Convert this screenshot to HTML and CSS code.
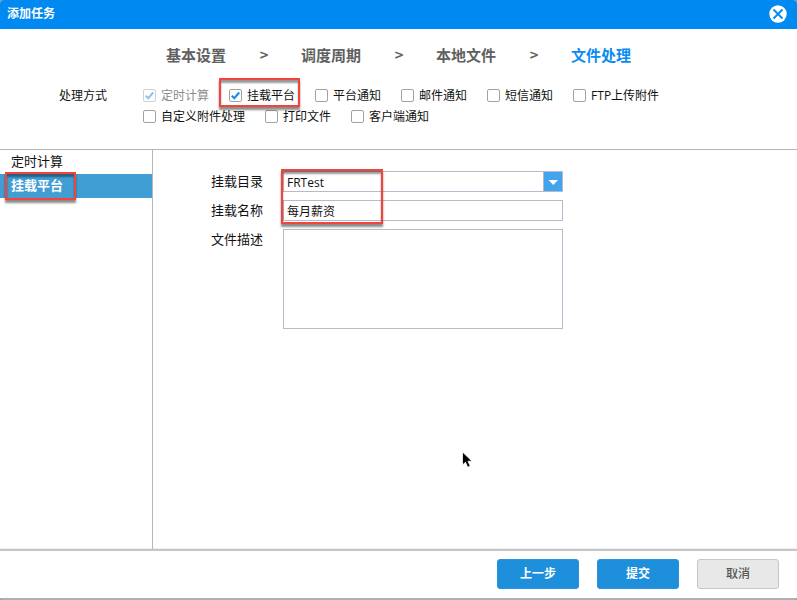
FILE: index.html
```html
<!DOCTYPE html>
<html lang="zh-CN">
<head>
<meta charset="utf-8">
<title>添加任务</title>
<link rel="stylesheet" href="styles.css">
</head>
<body>
<form class="dialog">
  <header class="titlebar">
    <h1 class="title">添加任务</h1>
    <button class="close" type="button" aria-label="关闭">
      <svg viewBox="0 0 18 18" width="18" height="18"><circle cx="9" cy="9" r="8.7" fill="#fff"/><path d="M4.500 4.500l9 9M13.500 4.500l-9 9" stroke="#0a8cee" stroke-width="2" fill="none"/></svg>
    </button>
  </header>

  <nav class="steps">
    <span>基本设置</span><span class="sep">&gt;</span>
    <span>调度周期</span><span class="sep">&gt;</span>
    <span>本地文件</span><span class="sep">&gt;</span>
    <span class="current">文件处理</span>
  </nav>

  <section class="methods">
    <span class="methods-label">处理方式</span>
    <div class="options">
      <label class="option disabled"><input type="checkbox" checked disabled>定时计算</label>
      <label class="option marked"><input type="checkbox" checked>挂载平台<span class="mark mark-option"></span></label>
      <label class="option"><input type="checkbox">平台通知</label>
      <label class="option"><input type="checkbox">邮件通知</label>
      <label class="option"><input type="checkbox">短信通知</label>
      <label class="option"><input type="checkbox">FTP上传附件</label>
      <label class="option"><input type="checkbox">自定义附件处理</label>
      <label class="option"><input type="checkbox">打印文件</label>
      <label class="option"><input type="checkbox">客户端通知</label>
    </div>
  </section>

  <main class="body">
    <aside class="sidebar">
      <a class="tab" href="#timing">定时计算</a>
      <a class="tab active marked" href="#mount">挂载平台<span class="mark mark-tab"></span></a>
    </aside>
    <section class="fields">
      <label for="dir">挂载目录</label>
      <div class="combo marked">
        <select id="dir" class="control"><option>FRTest</option></select>
        <svg class="arrow" viewBox="0 0 18 19"><path d="M4.500 8h9.500l-4.700 5z" fill="#fff"/></svg>
        <span class="mark mark-fields"></span>
      </div>
      <label for="name">挂载名称</label>
      <input id="name" class="control" type="text" value="每月薪资">
      <label for="desc">文件描述</label>
      <textarea id="desc" class="control description"></textarea>
    </section>
    <svg class="pointer" viewBox="0 0 12 18" width="12" height="18"><path d="M1.500 1v13l3-2.800 2.200 5 2.500-1-2.200-5h4z" fill="#000" stroke="#fff" stroke-width=".8"/></svg>
  </main>

  <footer class="footer">
    <button class="button primary" type="button">上一步</button>
    <button class="button primary" type="submit">提交</button>
    <button class="button" type="button">取消</button>
  </footer>
</form>
</body>
</html>
```
FILE: styles.css
```css
* {
  box-sizing: border-box;
}

body {
  margin: 0;
  background: #8b939b;
  color: #111;
  font: 12px/20px "Open Sans", "Noto Sans CJK SC", sans-serif;
}

button,
input,
select,
textarea {
  font: inherit;
  color: inherit;
}

.dialog {
  display: flex;
  flex-direction: column;
  min-height: 100vh;
  background: #fff;
  border-bottom: 2px solid #aab0b6;
  border-radius: 4px 4px 2px 2px;
  overflow: hidden;
}

.titlebar {
  display: flex;
  align-items: center;
  justify-content: space-between;
  height: 29px;
  padding: 0 10px 2px 7px;
  background: #0089f0;
  color: #fff;
}

.title {
  margin: 0;
  font-size: 12px;
  font-weight: 700;
}

.close {
  display: flex;
  padding: 0;
  border: 0;
  background: none;
}

.steps {
  display: flex;
  justify-content: center;
  gap: 33px;
  padding-top: 16px;
  color: #606060;
  font-size: 15px;
  font-weight: 700;
}

.sep {
  width: 9px;
  font-family: "DejaVu Sans", sans-serif;
  font-size: 12px;
}

.current {
  color: #0a8cf0;
}

.methods {
  display: flex;
  gap: 36px;
  padding: 21px 59px 22px;
  border-bottom: 1px solid #b4b7ba;
}

.methods-label {
  flex: none;
}

.options {
  display: flex;
  flex-wrap: wrap;
  gap: 1px 20px;
}

.option {
  display: flex;
  align-items: center;
  gap: 5px;
}

.option input {
  appearance: none;
  width: 13px;
  height: 13px;
  margin: 0 0 2px;
  border: 1px solid #a2a2a2;
  border-radius: 2px;
  background: #fff;
}

.option input:checked {
  background: url("data:image/svg+xml,%3Csvg xmlns='http://www.w3.org/2000/svg' viewBox='0 0 11 11'%3E%3Cpath d='M1.800 5.800l2.500 2.500L9.200 2.500' fill='none' stroke='%231a8cea' stroke-width='2.100'/%3E%3C/svg%3E");
}

.option.disabled {
  color: #8c8c8c;
}

.option.disabled input {
  opacity: .5;
}

.marked {
  position: relative;
}

.mark {
  position: absolute;
  z-index: 1;
  border: 2px solid #f4433a;
  box-shadow: 0 3px 2px rgba(0, 0, 0, .45), inset 0 3px 2px rgba(0, 0, 0, .4);
  pointer-events: none;
}

.mark-option {
  inset: -8px -5px -1px -10px;
}

.mark-tab {
  top: -2px;
  left: 5px;
  width: 71px;
  height: 28px;
}

.mark-fields {
  top: -2px;
  left: -2px;
  width: 102px;
  height: 55px;
}

.body {
  position: relative;
  display: flex;
  flex: 1;
}

.sidebar {
  flex: none;
  width: 153px;
  border-right: 1px solid #b4b7ba;
  font-size: 13px;
}

.tab {
  display: block;
  padding: 0 0 2px 11px;
  line-height: 22px;
  color: #111;
  text-decoration: none;
}

.tab.active {
  background: #409ed4;
  color: #fff;
  font-weight: 700;
}

.fields {
  display: grid;
  grid-template-columns: 52px minmax(0, 280px);
  gap: 8px 20px;
  flex: 1;
  align-content: start;
  padding: 21px 58px;
  font-size: 13px;
}

.combo {
  display: flex;
}

.control {
  appearance: none;
  width: 100%;
  height: 21px;
  margin: 0;
  padding: 1px 3px 0;
  border: 1px solid #b9b9cc;
  border-radius: 0;
  background: #fff;
  font-size: 12px;
  line-height: 20px;
}

.description {
  display: block;
  height: 100px;
  resize: none;
}

.arrow {
  position: absolute;
  top: 1px;
  right: 1px;
  width: 19px;
  height: 19px;
  border-left: 1px solid #b0b8c4;
  background: #42a4ec;
  pointer-events: none;
}

.pointer {
  position: absolute;
  top: 301px;
  left: 461px;
}

.footer {
  display: flex;
  justify-content: flex-end;
  gap: 18px;
  padding: 8px 18px 9px;
  border-top: 2px solid #c6c6c6;
  box-shadow: 0 -1px 1px #eee;
}

.button {
  width: 82px;
  height: 30px;
  padding: 0;
  border: 1px solid #c6c6c6;
  border-radius: 3px;
  background: #e8e8e8;
  color: #555;
  font-weight: 500;
}

.button.primary {
  border-color: #2b93dd;
  background: #1e8fdb;
  color: #fff;
  font-weight: 700;
}
```
